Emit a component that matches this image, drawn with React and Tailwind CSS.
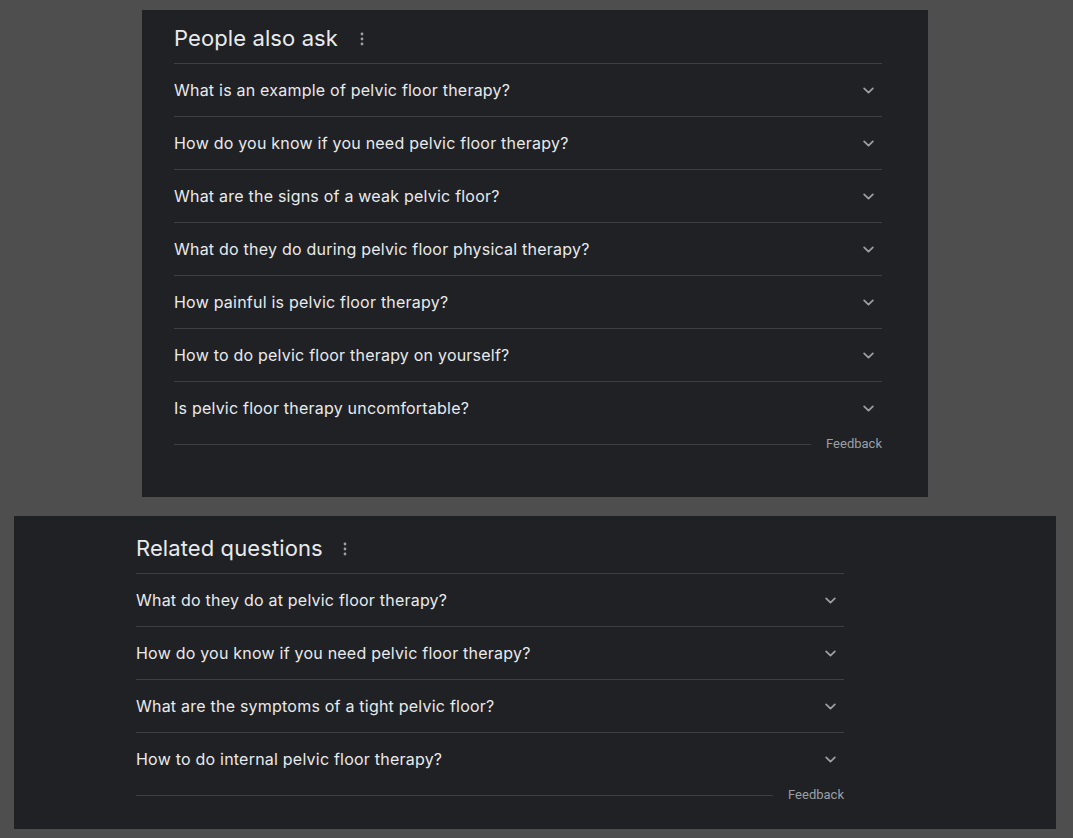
import React from 'react';

const paa = [
  'What is an example of pelvic floor therapy?',
  'How do you know if you need pelvic floor therapy?',
  'What are the signs of a weak pelvic floor?',
  'What do they do during pelvic floor physical therapy?',
  'How painful is pelvic floor therapy?',
  'How to do pelvic floor therapy on yourself?',
  'Is pelvic floor therapy uncomfortable?',
];

const related = [
  'What do they do at pelvic floor therapy?',
  'How do you know if you need pelvic floor therapy?',
  'What are the symptoms of a tight pelvic floor?',
  'How to do internal pelvic floor therapy?',
];

const Chevron = () => (
  <svg width="15" height="15" viewBox="0 0 24 24" className="text-[#9aa0a6]">
    <path d="M5 8.5l7 7 7-7" fill="none" stroke="currentColor" strokeWidth="2.8" strokeLinecap="round" strokeLinejoin="round" />
  </svg>
);

const Dots = () => (
  <svg width="4" height="14" viewBox="0 0 4 14" className="text-[#9aa0a6]">
    <circle cx="2" cy="2" r="1.4" fill="currentColor" />
    <circle cx="2" cy="7" r="1.4" fill="currentColor" />
    <circle cx="2" cy="12" r="1.4" fill="currentColor" />
  </svg>
);

const QuestionBlock = ({ title, questions, headerH, dotsGap }) => (
  <div className="w-[708px]">
    <div className={`flex items-center ${headerH}`}>
      <span className="text-[22px] text-[#e8eaed] tracking-[0.1px]">{title}</span>
      <span className={dotsGap}><Dots /></span>
    </div>
    {questions.map((q) => (
      <div
        key={q}
        className="flex items-center justify-between border-t border-[#3c4043] h-[53px]"
      >
        <span className="text-[16px] text-[#e8eaed] tracking-[0.22px]">{q}</span>
        <span className="mr-[6px] flex items-center"><Chevron /></span>
      </div>
    ))}
    <div className="flex items-center h-[2px] mt-[9px]">
      <div className="flex-1 border-t border-[#3c4043]" />
      <span className="pl-[15px] text-[13px] text-[#9aa0a6] font-['Roboto',sans-serif]">Feedback</span>
    </div>
  </div>
);

export default function App() {
  return (
    <div className="w-[1073px] h-[838px] bg-[#4e4e4e] font-['Inter',sans-serif] overflow-hidden">
      <div className="ml-[142px] mt-[10px] w-[786px] h-[487px] bg-[#202124] pl-[32px]">
        <QuestionBlock
          title="People also ask"
          questions={paa}
          headerH="h-[53px] pt-[4px]"
          dotsGap="ml-[22px]"
        />
      </div>
      <div className="ml-[14px] mt-[19px] w-[1042px] h-[313px] bg-[#202124] pl-[122px]">
        <QuestionBlock
          title="Related questions"
          questions={related}
          headerH="h-[57px] pt-[8px]"
          dotsGap="ml-[20px]"
        />
      </div>
    </div>
  );
}
